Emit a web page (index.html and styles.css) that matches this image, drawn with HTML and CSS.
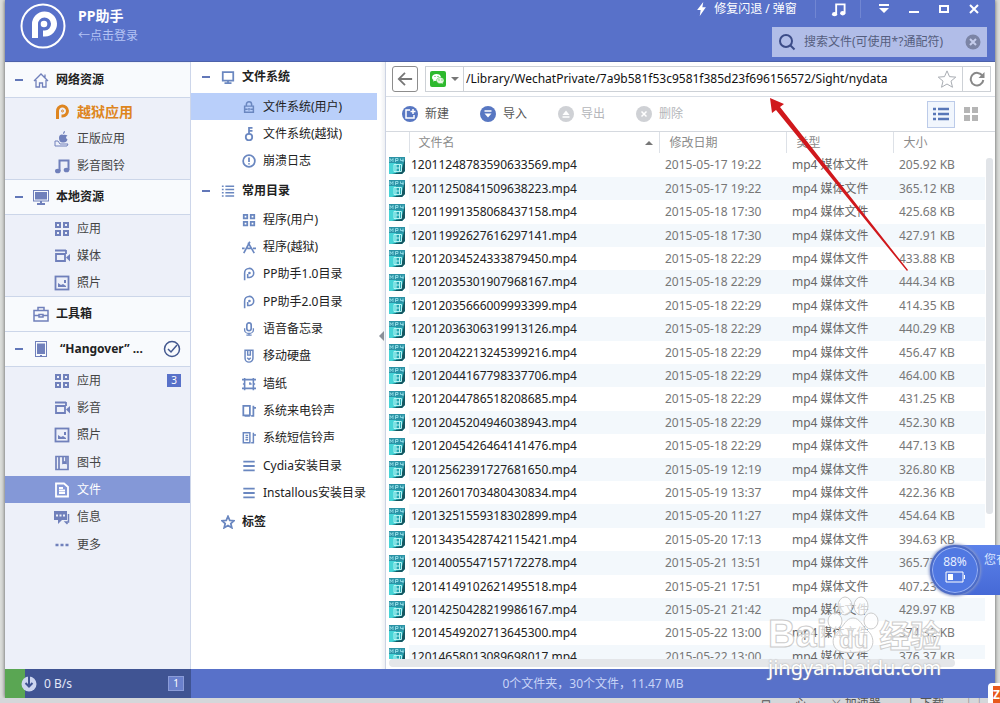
FILE: index.html
```
<!DOCTYPE html>
<html lang="zh-CN">
<head>
    <meta charset="UTF-8">
    <meta name="viewport" content="width=device-width, initial-scale=1.0">
    <title>PP助手</title>
    <link rel="stylesheet" href="styles.css">
</head>
<body>
    <svg class="sprite" width="0" height="0">
        <symbol id="i-home" viewBox="0 0 16 16"><path d="M1 9 8 2l7 7M3 8v7h3.500v-4h3v4H13V8M12 2.500v3" stroke-width="1.300" /></symbol>
        <symbol id="i-pp" viewBox="0 0 16 16"><path d="M3.500 15V7.500a5 5 0 1 1 5 4.500H7.500" stroke-width="3" /><circle cx="8.500" cy="7" r="1" /></symbol>
        <symbol id="i-ppthin" viewBox="0 0 16 16"><path d="M3 15V7a5.200 5.200 0 1 1 5.500 5H6.500V8" stroke-width="1.800" /><circle class="fill" cx="8.500" cy="6.800" r="1.500" /></symbol>
        <symbol id="i-apple" viewBox="0 0 16 16"><path class="fill" d="M9 4C8 3 5 3.500 5 7s2 5 4 4.500c2 .5 4-1 4.500-3-2-1-2-3 0-4C12 3.500 10 3.500 9 4zM9 3c0-2 1-3 2-3 0 2-1 3-2 3z" /><path d="M1 10h3l2 3h8l-1 2H1z" /></symbol>
        <symbol id="i-music" viewBox="0 0 16 16"><path d="M5.500 13V2.500h9V12" stroke-width="2" /><ellipse class="fill" cx="3.800" cy="13" rx="2.800" ry="2.300" /><ellipse class="fill" cx="12.500" cy="12" rx="2.800" ry="2.300" /></symbol>
        <symbol id="i-pc" viewBox="0 0 16 16"><rect x=".5" y="1.500" width="15" height="10.500" /><rect class="fill" x="2" y="3" width="12" height="7.500" /><path d="M8 12v2.500M4 15h8" stroke-width="2" /></symbol>
        <symbol id="i-apps" viewBox="0 0 16 16"><path d="M2 2h4v4H2zM10 2h4v4h-4zM2 10h4v4H2zM10 10h4v4h-4z" stroke-width="2" /></symbol>
        <symbol id="i-video" viewBox="0 0 16 16"><path d="M1 2.500h11M2 6h9v7H2zM12 2v4" stroke-width="1.800" /><path class="fill" d="m12 9.500 4-3.500v7.500z" /></symbol>
        <symbol id="i-photo" viewBox="0 0 16 16"><rect x="1.500" y="1.500" width="13" height="13" stroke-width="1.800" /><path class="fill" d="M4 12V8l3 2 2-1 3 2v1zM10 5h2v3h-2z" /></symbol>
        <symbol id="i-case" viewBox="0 0 16 16"><path d="M1 4.500h14V15H1zM5 4V1.500h6V4M1 9.500h5M10 9.500h5M6 8.500h4v2.500H6z" stroke-width="1.500" /></symbol>
        <symbol id="i-pad" viewBox="0 0 16 16"><rect x="2.500" y=".5" width="11" height="15" /><rect class="fill" x="4" y="2.500" width="8" height="10.500" /><path d="M7 14.500h2" /></symbol>
        <symbol id="i-book" viewBox="0 0 16 16"><path d="M2 1.500h12v13H2zM5 2v12M9 2v6l1.500-1L12 8V2" stroke-width="1.700" /></symbol>
        <symbol id="i-file" viewBox="0 0 16 16"><path d="M2 1.500h8l4 3.500v9.500H2zM5 6h4M5 8.500h6M5 11h6" stroke-width="1.800" /></symbol>
        <symbol id="i-chat" viewBox="0 0 16 16"><path class="fill" fill-rule="evenodd" d="M0 2h13v9H8l-4 4v-4H0zm2 3.500v2h2v-2zm3.500 0v2h2v-2zm3.500 0v2h2v-2z" /><path d="M14.500 5v8h-3l2 2" stroke-width="1.500" /></symbol>
        <symbol id="i-more" viewBox="0 0 16 16"><path d="M1.500 8h3M6.500 8h3M11.500 8h3" stroke-width="2.500" /></symbol>
        <symbol id="i-screen" viewBox="0 0 16 16"><path d="M2 2.500h12V12H2zM8 12v3M4 15h8" stroke-width="2" /></symbol>
        <symbol id="i-lock" viewBox="0 0 16 16"><path d="M3 7h10v7H3zM5 7V5a3 3 0 0 1 6 0v2M3 10.500h3.500M9.500 10.500H13M8 9v3" stroke-width="1.700" /></symbol>
        <symbol id="i-key" viewBox="0 0 16 16"><circle cx="8" cy="11.500" r="3.700" stroke-width="2" /><path d="M8 8V1h4M8 4.500h4" stroke-width="2" /></symbol>
        <symbol id="i-warn" viewBox="0 0 16 16"><circle cx="8" cy="8" r="6.700" stroke-width="2" /><path d="M8 4v5M8 10.500v1.500" stroke-width="2" /></symbol>
        <symbol id="i-list" viewBox="0 0 16 16"><path d="M1 2.500h2M5 2.500h10M1 6.200h2M5 6.200h10M1 9.900h2M5 9.900h10M1 13.600h2M5 13.600h10" stroke-width="1.700" /></symbol>
        <symbol id="i-store" viewBox="0 0 16 16"><path d="M2 15 9 2M7 3l7 12M0 9.500h3M6 9.500h4M12.500 9.500H16" stroke-width="1.900" /></symbol>
        <symbol id="i-mic" viewBox="0 0 16 16"><rect x="5.500" y="1" width="5" height="9" rx="2.500" stroke-width="1.900" /><path d="M3 7v2a5 4 0 0 0 10 0V7M8 13v2M5 15h6" stroke-width="1.500" /></symbol>
        <symbol id="i-disk" viewBox="0 0 16 16"><path d="M3.500 1.500h9v9a4.500 4.500 0 1 1-9 0zM6.500 2v5h3V2M6 10l2 2 2-2" stroke-width="1.700" /></symbol>
        <symbol id="i-wall" viewBox="0 0 16 16"><path d="M3 3h10v10H3zM0 3h3V1M16 3h-3V1M0 13h3v2M16 13h-3v2M1 8h2M13 8h2M9 6v2h2" stroke-width="1.800" /></symbol>
        <symbol id="i-ring" viewBox="0 0 16 16"><path d="M1.500 2H9v11H1.500zM3 13.500h6M13 2v11.500h-2.500M13 4.500h3" stroke-width="2" /></symbol>
        <symbol id="i-sms" viewBox="0 0 16 16"><path d="M1.500 2H9v11.500H1.500zM4 5h3M4 7.500h3M4 10h3M13 2v11.500h-2.500M13 4.500h3" stroke-width="1.700" /></symbol>
        <symbol id="i-lines" viewBox="0 0 16 16"><path d="M1.500 3h13M1.500 8h13M1.500 13h13" stroke-width="2.200" /></symbol>
        <symbol id="i-star" viewBox="0 0 16 16"><path d="m8 1.500 2 4.600 5 .4-3.800 3.200 1.200 4.900L8 12l-4.400 2.600 1.200-4.900L1 6.500l5-.4z" /></symbol>
        <symbol id="i-mp4" viewBox="0 0 16 17">
            <path d="M0 0h16v14l-3 3H0z" fill="#27a7b2" stroke="none" />
            <path d="M0 6h7v11H0z" fill="#45d3d6" stroke="none" />
            <path d="M0 0h16v6H0z" fill="#2c93a6" stroke="none" />
            <path d="M16 2v12l-3 3H3l9-2z" fill="#155660" stroke="none" />
            <path d="M1 5V1.500l1.500 2 1.500-2V5M6.500 5V1.500H9v2H6.500M11.500 1.500v2h3M14 1.500V5" stroke="#9fe6ee" stroke-width=".8" />
            <path d="M5 7.500h7.500v7H5zM7 7.500v7M10.500 7.500v7M7 11h3.500" stroke="#b5f3f3" stroke-width="1" />
        </symbol>
    </svg>

    <div class="window">
        <header class="titlebar">
            <svg class="logo" viewBox="0 0 46 46">
                <circle cx="23" cy="23" r="21.500" />
                <path d="M15 35V21a9.500 9.500 0 1 1 10 9.500h-2" stroke-width="6" />
                <circle class="dot" cx="24" cy="21" r="3.300" />
            </svg>
            <div class="account">
                <h1>PP助手</h1>
                <a href="#">←点击登录</a>
            </div>
            <div class="title-right">
                <div class="title-tools">
                    <button class="repair"><svg viewBox="0 0 10 16"><path class="fill" d="M7 0 0 9h4l-1 7 7-10H6z" /></svg>修复闪退 / 弹窗</button>
                    <button class="tune" aria-label="音乐"><svg class="icon"><use href="#i-music" /></svg></button>
                    <button aria-label="菜单"><svg viewBox="0 0 12 12"><path class="fill" d="M1 1h10v2H1zM1 5h10l-5 5z" /></svg></button>
                    <button aria-label="最小化"><svg viewBox="0 0 12 12"><path d="M1 9h10" stroke-width="2" /></svg></button>
                    <button aria-label="最大化"><svg viewBox="0 0 12 12"><path d="M2 3h8v6H2z" stroke-width="2" /></svg></button>
                    <button aria-label="关闭"><svg viewBox="0 0 12 12"><path d="m2 2 8 8M10 2l-8 8" stroke-width="2" /></svg></button>
                </div>
                <div class="search">
                    <svg class="glass" viewBox="0 0 18 18"><circle cx="8" cy="8" r="6" /><path d="m12.500 12.500 4 4" /></svg>
                    <input type="text" aria-label="搜索文件" placeholder="搜索文件(可使用*?通配符)">
                    <button class="clear" aria-label="清除"><svg viewBox="0 0 16 16"><circle cx="8" cy="8" r="7.500" /><path d="m5 5 6 6M11 5l-6 6" /></svg></button>
                </div>
            </div>
        </header>

        <div class="content">
            <nav class="sidebar">
                <h2><i class="minus"></i><svg class="icon"><use href="#i-home" /></svg>网络资源</h2>
                <ul>
                    <li><a class="hot" href="#"><svg class="icon"><use href="#i-pp" /></svg>越狱应用</a></li>
                    <li><a href="#"><svg class="icon"><use href="#i-apple" /></svg>正版应用</a></li>
                    <li><a href="#"><svg class="icon"><use href="#i-music" /></svg>影音图铃</a></li>
                </ul>
                <h2><i class="minus"></i><svg class="icon"><use href="#i-pc" /></svg>本地资源</h2>
                <ul>
                    <li><a href="#"><svg class="icon"><use href="#i-apps" /></svg>应用</a></li>
                    <li><a href="#"><svg class="icon"><use href="#i-video" /></svg>媒体</a></li>
                    <li><a href="#"><svg class="icon"><use href="#i-photo" /></svg>照片</a></li>
                </ul>
                <h2><i class="minus none"></i><svg class="icon"><use href="#i-case" /></svg>工具箱</h2>
                <h2><i class="minus"></i><svg class="icon"><use href="#i-pad" /></svg><span class="device">“Hangover” ...</span>
                    <svg class="check" viewBox="0 0 18 18"><circle cx="9" cy="9" r="7.500" /><path d="m5 9 3 3 6-7" /></svg>
                </h2>
                <ul>
                    <li><a href="#"><svg class="icon"><use href="#i-apps" /></svg>应用<span class="badge">3</span></a></li>
                    <li><a href="#"><svg class="icon"><use href="#i-video" /></svg>影音</a></li>
                    <li><a href="#"><svg class="icon"><use href="#i-photo" /></svg>照片</a></li>
                    <li><a href="#"><svg class="icon"><use href="#i-book" /></svg>图书</a></li>
                    <li><a class="active" href="#"><svg class="icon"><use href="#i-file" /></svg>文件</a></li>
                    <li><a href="#"><svg class="icon"><use href="#i-chat" /></svg>信息</a></li>
                    <li><a href="#"><svg class="icon"><use href="#i-more" /></svg>更多</a></li>
                </ul>
            </nav>

            <nav class="folders">
                <h2><i class="minus"></i><svg class="icon"><use href="#i-screen" /></svg>文件系统</h2>
                <ul>
                    <li><a class="active" href="#"><svg class="icon"><use href="#i-lock" /></svg>文件系统(用户)</a></li>
                    <li><a href="#"><svg class="icon"><use href="#i-key" /></svg>文件系统(越狱)</a></li>
                    <li><a href="#"><svg class="icon"><use href="#i-warn" /></svg>崩溃日志</a></li>
                </ul>
                <h2><i class="minus"></i><svg class="icon"><use href="#i-list" /></svg>常用目录</h2>
                <ul>
                    <li><a href="#"><svg class="icon"><use href="#i-apps" /></svg>程序(用户)</a></li>
                    <li><a href="#"><svg class="icon"><use href="#i-store" /></svg>程序(越狱)</a></li>
                    <li><a href="#"><svg class="icon"><use href="#i-ppthin" /></svg>PP助手1.0目录</a></li>
                    <li><a href="#"><svg class="icon"><use href="#i-ppthin" /></svg>PP助手2.0目录</a></li>
                    <li><a href="#"><svg class="icon"><use href="#i-mic" /></svg>语音备忘录</a></li>
                    <li><a href="#"><svg class="icon"><use href="#i-disk" /></svg>移动硬盘</a></li>
                    <li><a href="#"><svg class="icon"><use href="#i-wall" /></svg>墙纸</a></li>
                    <li><a href="#"><svg class="icon"><use href="#i-ring" /></svg>系统来电铃声</a></li>
                    <li><a href="#"><svg class="icon"><use href="#i-sms" /></svg>系统短信铃声</a></li>
                    <li><a href="#"><svg class="icon"><use href="#i-lines" /></svg>Cydia安装目录</a></li>
                    <li><a href="#"><svg class="icon"><use href="#i-lines" /></svg>Installous安装目录</a></li>
                </ul>
                <h2 class="tags"><i class="minus none"></i><svg class="icon"><use href="#i-star" /></svg>标签</h2>
            </nav>
            <div class="splitter"><i></i></div>

            <main>
                <div class="address-row">
                    <button class="back" aria-label="后退"><svg viewBox="0 0 18 18"><path d="M17 9H2M9 2 2 9l7 7" /></svg></button>
                    <div class="address">
                        <button class="app" aria-label="微信">
                            <svg viewBox="0 0 16 16">
                                <rect width="16" height="16" rx="2" fill="#2db92d" />
                                <path fill="#fff" d="M6.500 3C4 3 2 4.500 2 6.500c0 1.200.6 2 1.500 2.600L3 10.500l2-.8c3 .8 6-.7 6-3.200S9 3 6.500 3z" />
                                <path fill="#e9f7e4" stroke="#2db92d" stroke-width=".5" d="M10.500 6.500c-2.200 0-4 1.300-4 3.200 0 2 2.400 3.400 5 2.800l1.700.8-.4-1.400c2.500-1.900 1-5.400-2.300-5.400z" />
                                <path stroke="#2db92d" d="M4.500 5.500h1M7.500 5.500h1M8.500 9h1M11.500 9h1" />
                            </svg>
                            <i></i>
                        </button>
                        <input type="text" aria-label="路径" value="/Library/WechatPrivate/7a9b581f53c9581f385d23f696156572/Sight/nydata">
                        <button class="fav" aria-label="收藏"><svg class="icon"><use href="#i-star" /></svg></button>
                        <button class="reload" aria-label="刷新"><svg viewBox="0 0 16 16"><path d="M13.500 5A6.300 6.300 0 1 0 14.300 9" /><path class="fill" d="M15.500 1v6h-6z" /></svg></button>
                    </div>
                </div>

                <div class="toolbar">
                    <button><svg viewBox="0 0 16 16"><circle cx="8" cy="8" r="8" /><path d="M8 4H4v8h8V9M11 3v5M8.500 5.500h5" /></svg>新建</button>
                    <button><svg viewBox="0 0 16 16"><circle cx="8" cy="8" r="8" /><path d="M4.500 5h7" /><path class="tip" d="M4.500 7.500h7L8 11.500z" /></svg>导入</button>
                    <button disabled><svg viewBox="0 0 16 16"><circle cx="8" cy="8" r="8" /><path d="M4.500 11h7" /><path class="tip" d="M4.500 9h7L8 4.500z" /></svg>导出</button>
                    <button disabled><svg viewBox="0 0 16 16"><circle cx="8" cy="8" r="8" /><path d="m5.500 5.500 5 5M10.500 5.500l-5 5" /></svg>删除</button>
                    <div class="views">
                        <button class="on" aria-label="列表"><svg viewBox="0 0 16 16"><path d="M0 3h3M5 3h11M0 8h3M5 8h11M0 13h3M5 13h11" /></svg></button>
                        <button aria-label="图标"><svg viewBox="0 0 16 16"><path class="tile" d="M1 1h6v6H1zM9 1h6v6H9zM1 9h6v6H1zM9 9h6v6H9z" /></svg></button>
                    </div>
                </div>

                <div class="list">
                    <table>
                        <colgroup><col class="c-icon"><col><col class="c-date"><col class="c-type"><col class="c-size"></colgroup>
                        <thead>
                            <tr><th></th><th>文件名<i></i></th><th>修改日期</th><th>类型</th><th>大小</th></tr>
                        </thead>
                        <tbody id="files"></tbody>
                    </table>
                    <div class="vbar"><i></i></div>
                </div>
                <div class="hbar"></div>
            </main>
        </div>

        <footer>
            <div class="speed">
                <i class="used"></i>
                <svg viewBox="0 0 16 16"><circle cx="8" cy="8" r="7.500" /><path d="M8 0v10M4.500 7 8 10.500 11.500 7" /></svg>
                <span>0 B/s</span>
                <span class="badge">1</span>
            </div>
            <p>0个文件夹，30个文件，11.47 MB</p>
        </footer>
    </div>

    <div class="under"><span>⊟</span><span>心</span><span>⚔ 加速器</span><span>↓ 下载</span><span>▢</span></div>

    <svg class="arrow" viewBox="0 0 140 176">
        <path d="M1 1 3 16l4-3 131 161 1-1L11 10l4-3z" />
    </svg>

    <div class="float">
        <div class="tab">您有</div>
        <div class="ball">
            <span>88%</span>
            <svg viewBox="0 0 20 12"><path d="M1 1h17v10H1zM19.500 4v4" /><path class="fill" d="M3 3h5v6H3z" /></svg>
        </div>
    </div>

    <div class="watermark">
        <div class="brand">Bai<svg viewBox="0 0 52 60"><ellipse cx="8" cy="25" rx="7" ry="8" /><ellipse cx="18" cy="10" rx="7" ry="9" /><ellipse cx="34" cy="10" rx="7" ry="9" /><ellipse cx="44" cy="25" rx="7" ry="8" /><path d="M26 22c7 0 9 8 15 13 8 7 6 21-5 21-6 0-14 1-20 0-11-1-13-14-5-21 6-5 8-13 15-13z" /><text x="12" y="52">du</text></svg><b>经验</b></div>
        <div class="url">jingyan.baidu.com</div>
    </div>
    <div class="ime"><span>Z</span></div>

    <script>
        const files = [
            ["12011248783590633569", "2015-05-17 19:22", "205.92"],
            ["12011250841509638223", "2015-05-17 19:22", "365.12"],
            ["12011991358068437158", "2015-05-18 17:30", "425.68"],
            ["12011992627616297141", "2015-05-18 17:30", "427.91"],
            ["12012034524333879450", "2015-05-18 22:29", "433.88"],
            ["12012035301907968167", "2015-05-18 22:29", "444.34"],
            ["12012035666009993399", "2015-05-18 22:29", "414.35"],
            ["12012036306319913126", "2015-05-18 22:29", "440.29"],
            ["12012042213245399216", "2015-05-18 22:29", "456.47"],
            ["12012044167798337706", "2015-05-18 22:29", "464.00"],
            ["12012044786518208685", "2015-05-18 22:29", "431.25"],
            ["12012045204946038943", "2015-05-18 22:29", "452.30"],
            ["12012045426464141476", "2015-05-18 22:29", "447.13"],
            ["12012562391727681650", "2015-05-19 12:19", "326.80"],
            ["12012601703480430834", "2015-05-19 13:37", "422.36"],
            ["12013251559318302899", "2015-05-20 11:27", "454.64"],
            ["12013435428742115421", "2015-05-20 17:13", "394.63"],
            ["12014005547157172278", "2015-05-21 13:51", "365.77"],
            ["12014149102621495518", "2015-05-21 17:51", "407.23"],
            ["12014250428219986167", "2015-05-21 21:42", "429.97"],
            ["12014549202713645300", "2015-05-22 13:00", "374.32"],
            ["12014658013089698017", "2015-05-22 13:00", "376.37"]
        ];

        document.getElementById("files").innerHTML = files.map(f => `<tr>
            <td><svg class="mp4"><use href="#i-mp4" /></svg></td>
            <td>${f[0]}.mp4</td>
            <td>${f[1]}</td>
            <td>mp4 媒体文件</td>
            <td>${f[2]} KB</td>
        </tr>`).join("");
    </script>
</body>
</html>
```
FILE: styles.css
```
* {
    box-sizing: border-box;
}
body {
    margin: 0;
    height: 100vh;
    overflow: hidden;
    display: flex;
    flex-direction: column;
    font: 12px/20px "Noto Sans", "Noto Sans CJK SC", sans-serif;
    color: #222;
    background: #dcdedb;
}
h1, h2, ul, p {
    margin: 0;
    padding: 0;
    list-style: none;
    font-size: 12px;
}
a {
    color: inherit;
    text-decoration: none;
}
button {
    border: 0;
    padding: 0;
    background: none;
    font: inherit;
    color: inherit;
    display: flex;
    align-items: center;
    justify-content: center;
}
input {
    border: 0;
    padding: 0;
    background: none;
    font: inherit;
    min-width: 0;
    flex: 1;
    outline: 0;
}
svg {
    fill: none;
    stroke: currentColor;
    flex: none;
}
.sprite {
    position: absolute;
}
.fill {
    fill: currentColor;
    stroke: none;
}
.icon {
    width: 16px;
    height: 16px;
    color: #7080bb;
}

.window {
    flex: 1;
    min-height: 0;
    margin: 0 5px;
    display: flex;
    flex-direction: column;
    background: #fff;
    box-shadow: 0 0 4px #555;
}

/* title bar */
.titlebar {
    height: 62px;
    flex: none;
    display: flex;
    background: #5871c9;
    border-bottom: 1px solid #4d62aa;
    color: #fff;
}
.logo {
    width: 46px;
    height: 46px;
    margin: 3px 12px 0 15px;
    stroke-width: 2;
}
.logo .dot {
    fill: #fff;
    stroke: none;
}
.account {
    padding-top: 6px;
}
.account h1 {
    font-size: 14px;
}
.account a {
    color: #b4c3f4;
}
.title-right {
    margin-left: auto;
    display: flex;
    flex-direction: column;
    align-items: flex-end;
}
.title-tools {
    display: flex;
    height: 18px;
    margin-right: 6px;
}
.title-tools button {
    width: 30px;
}
.title-tools svg {
    width: 12px;
    height: 12px;
}
.title-tools .repair {
    width: 120px;
    padding-right: 16px;
    gap: 8px;
}
.title-tools .repair svg {
    width: 9px;
    height: 14px;
}
.title-tools .tune {
    width: 46px;
    margin-right: 8px;
    border: 0 solid #7186d2;
    border-width: 0 1px;
}
.title-tools .tune .icon {
    width: 15px;
    height: 15px;
    color: #fff;
}
.search {
    width: 215px;
    height: 30px;
    margin: 9px 8px 0 0;
    padding: 0 6px;
    display: flex;
    align-items: center;
    background: #b1bde8;
}
.glass {
    width: 18px;
    height: 18px;
    margin-right: 8px;
    color: #3c4c88;
    stroke-width: 2;
}
.search input::placeholder {
    color: #555e7e;
    opacity: 1;
}
.clear svg {
    width: 16px;
    height: 16px;
    stroke: #c5cdec;
    stroke-width: 2;
}
.clear circle {
    fill: #7b84a5;
    stroke: none;
}

/* left columns */
.content {
    flex: 1;
    min-height: 0;
    display: flex;
}
.sidebar {
    width: 186px;
    flex: none;
    padding-top: 1px;
    background: #edf0f9;
    border-right: 1px solid #cdd6ea;
    color: #444;
}
.sidebar h2, .folders h2, .sidebar a, .folders a {
    display: flex;
    align-items: center;
}
.sidebar h2 {
    height: 35px;
    padding: 0 9px 0 10px;
    background: #f8fafd;
    border-bottom: 1px solid #ccd6e9;
    color: #222;
}
.sidebar ul + h2, .sidebar h2 + h2 {
    box-shadow: 0 -1px #ccd6e9;
}
.sidebar h2 .icon {
    margin: 0 7px 0 10px;
}
.minus {
    width: 8px;
    height: 2px;
    background: #6277b8;
}
.minus.none {
    visibility: hidden;
}
.device {
    padding-left: 4px;
}
.check {
    width: 18px;
    height: 18px;
    margin-left: auto;
    color: #43588f;
    stroke-width: 1.5;
}
li a {
    height: 27px;
}
li:nth-child(3n) a {
    height: 28px;
}
.sidebar li a {
    padding: 0 9px 0 49px;
    gap: 7px;
}
.sidebar .hot {
    color: #de8520;
    font-size: 14px;
    font-weight: bold;
}
.hot .icon {
    color: #de8520;
}
.sidebar .active {
    background: #8498d7;
    color: #fff;
}
.sidebar .active .icon {
    color: #fff;
}
.badge {
    margin-left: auto;
    width: 14px;
    height: 13px;
    background: #5871c9;
    color: #fff;
    font-size: 10px;
    line-height: 13px;
    text-align: center;
}
.folders {
    width: 186px;
    flex: none;
}
.folders h2 {
    height: 31px;
    padding: 0 0 2px 11px;
}
.folders ul + h2 {
    padding-bottom: 0;
}
.folders h2 .icon {
    margin: 0 7px 0 11px;
}
.folders .icon {
    width: 14px;
    height: 14px;
    color: #6a87c0;
}
.tags .icon {
    stroke-width: 2;
}
.folders li a {
    padding-left: 51px;
    gap: 7px;
}
.folders .active {
    background: #b9cffa;
}
.splitter {
    width: 9px;
    flex: none;
    display: flex;
    align-items: center;
    border-right: 1px solid #ccd3e3;
    background: linear-gradient(90deg, #fff 40%, #eef0f3);
}
.splitter i {
    border: 5px solid transparent;
    border-left: 0;
    border-right-color: #8a8f98;
    margin: 0 0 60px 2px;
}

/* file panel */
main {
    flex: 1;
    min-width: 0;
    display: flex;
    flex-direction: column;
}
.address-row {
    height: 35px;
    padding: 4px 4px 4px 6px;
    flex: none;
    display: flex;
    gap: 7px;
    border-bottom: 1px solid #dadfe6;
}
.back {
    width: 26px;
    border: 1px solid #8d8d8d;
    border-radius: 3px;
    color: #777;
}
.back svg {
    width: 16px;
    height: 16px;
    stroke-width: 2;
}
.address {
    flex: 1;
    display: flex;
    border: 1px solid #cdd1d6;
}
.app {
    width: 38px;
    gap: 5px;
    border-right: 1px solid #cdd1d6;
}
.app svg {
    width: 16px;
    height: 16px;
    stroke: none;
}
.app i {
    border: 4px solid transparent;
    border-top-color: #777;
    border-bottom: 0;
}
.address input {
    padding-left: 2px;
    color: #111;
}
.fav {
    width: 30px;
}
.fav .icon {
    width: 20px;
    height: 20px;
    color: #a9adb3;
    stroke-width: .8;
}
.reload {
    width: 28px;
    border-left: 1px solid #cdd1d6;
    color: #888;
}
.reload svg {
    width: 16px;
    height: 16px;
    stroke-width: 2;
}
.toolbar {
    height: 35px;
    padding: 0 10px 0 16px;
    flex: none;
    display: flex;
    align-items: center;
    border-bottom: 1px solid #d5d9df;
    color: #555;
}
.toolbar > button {
    width: 78px;
    gap: 7px;
    justify-content: flex-start;
}
.toolbar svg {
    width: 16px;
    height: 16px;
    stroke: #fff;
    stroke-width: 1.5;
}
.toolbar circle {
    fill: #5877c2;
    stroke: none;
}
.toolbar .tip {
    fill: #fff;
    stroke: none;
}
.toolbar button:disabled {
    color: #b4b6ba;
}
.toolbar button:disabled circle {
    fill: #cfd1d5;
}
.views {
    margin-left: auto;
    display: flex;
}
.views button {
    width: 28px;
    height: 27px;
    border: 1px solid transparent;
}
.views button + button {
    margin-left: 2px;
}
.views .on {
    border-color: #bccbe9;
    background: #f1f6fd;
}
.views svg {
    stroke: #5877b8;
    stroke-width: 2.5;
}
.views .tile {
    fill: #b5b5b5;
    stroke: none;
}
.list {
    flex: 1;
    min-height: 0;
    overflow: hidden;
    display: flex;
    align-items: stretch;
}
table {
    flex: 1;
    height: 1px;
    border-collapse: collapse;
    table-layout: fixed;
    width: 100%;
    color: #777;
}
.c-icon {
    width: 23px;
}
.c-date {
    width: 127px;
}
.c-type {
    width: 107px;
}
.c-size {
    width: 92px;
}
th {
    height: 21px;
    padding: 0 0 0 10px;
    font-weight: normal;
    line-height: 20px;
    text-align: left;
    color: #8b8b8b;
    border-left: 1px solid #dde1e7;
}
th:first-child {
    border-left: 0;
}
th:nth-child(2) {
    padding-left: 9px;
}
th i {
    float: right;
    margin: 8px 6px 0 0;
    border: 4px solid transparent;
    border-bottom-color: #777;
    border-top: 0;
}
td {
    height: 23px;
    padding: 0 0 0 6px;
    white-space: nowrap;
}
tr:nth-child(5n+1) td, tr:nth-child(5n+3) td {
    height: 24px;
}
tbody tr:nth-child(even) {
    background: #f3f8fc;
}
td:nth-child(1) {
    padding-left: 3px;
    background: #fff;
}
td:nth-child(2) {
    padding-left: 2px;
    color: #222;
}
td:nth-child(4) {
    color: #666;
}
.mp4 {
    display: block;
    width: 16px;
    height: 17px;
}
.vbar {
    width: 10px;
    flex: none;
    padding: 26px 2px 0 1px;
}
.vbar i {
    display: block;
    height: 71%;
    border-radius: 3px;
    background: #e1e4e8;
}
.hbar {
    height: 8px;
    flex: none;
    margin: 0 40px 2px 3px;
    border-radius: 4px;
    background: #e4e6e9;
}

/* status bar */
footer {
    height: 29px;
    flex: none;
    display: flex;
    background: #5871c9;
    color: #c9d4f7;
    line-height: 29px;
}
.speed {
    width: 186px;
    display: flex;
    align-items: center;
    padding-right: 7px;
    background: #405493;
    color: #e3e8f8;
}
.used {
    width: 20px;
    height: 100%;
    margin-right: -4px;
    background: #5aa653;
}
.speed svg {
    width: 16px;
    height: 16px;
    margin-right: 7px;
    stroke: #405493;
    stroke-width: 2;
}
.speed circle {
    fill: #ccd5f0;
    stroke: none;
}
.speed .badge {
    width: 16px;
    height: 15px;
    background: #6a80cc;
    border: 1px solid #8b9cd8;
}
footer p {
    flex: 1;
    text-align: center;
}

.under {
    height: 5px;
    flex: none;
    overflow: hidden;
    padding: 0 20px;
    display: flex;
    justify-content: flex-end;
    gap: 24px;
    line-height: 12px;
    color: #555;
    background: #d5d7da;
}

/* overlays */
.arrow {
    position: absolute;
    left: 769px;
    top: 97px;
    width: 140px;
    height: 176px;
    stroke: none;
    fill: #d0181c;
}
.float {
    position: absolute;
    right: 0;
    top: 544px;
    width: 70px;
    height: 52px;
}
.tab {
    position: absolute;
    right: 0;
    top: 1px;
    width: 47px;
    height: 50px;
    padding: 5px 0 0 31px;
    overflow: hidden;
    white-space: nowrap;
    background: linear-gradient(#5c82ea, #4669d6);
    color: #d9e4ff;
}
.ball {
    position: absolute;
    left: 0;
    top: 1px;
    width: 50px;
    height: 50px;
    border: 2px solid #4d6cc6;
    border-radius: 50%;
    background: #5078e2;
    box-shadow: inset 0 0 0 1px #9bb3f3, 0 0 3px 1px #8998c8;
    display: flex;
    flex-direction: column;
    align-items: center;
    padding-top: 6px;
    color: #e6eeff;
    line-height: 18px;
}
.ball svg {
    width: 20px;
    height: 12px;
    color: #fff;
}
.watermark {
    position: absolute;
    left: 768px;
    top: 594px;
    color: rgba(255, 255, 255, .7);
}
.brand {
    display: flex;
    align-items: flex-end;
    height: 62px;
    font: bold 38px/44px "Liberation Sans", sans-serif;
    -webkit-text-stroke: 1px #ccc;
}
.brand svg {
    width: 52px;
    height: 60px;
    fill: rgba(255, 255, 255, .7);
    stroke: #ccc;
}
.brand text {
    font-size: 24px;
}
.brand b {
    font: bold 31px/44px "Noto Sans CJK SC", sans-serif;
}
.url {
    font: 20px/24px "Noto Sans", sans-serif;
    color: #fff;
    text-shadow: 0 0 2px #999;
}
.ime {
    position: absolute;
    right: 0;
    bottom: 0;
    width: 12px;
    height: 20px;
    padding: 3px 0 0 5px;
    border-radius: 4px 0 0 0;
    background: #fff;
}
.ime span {
    display: block;
    height: 17px;
    background: #e8591c;
    color: #fff;
    font-weight: bold;
    line-height: 17px;
}
```
